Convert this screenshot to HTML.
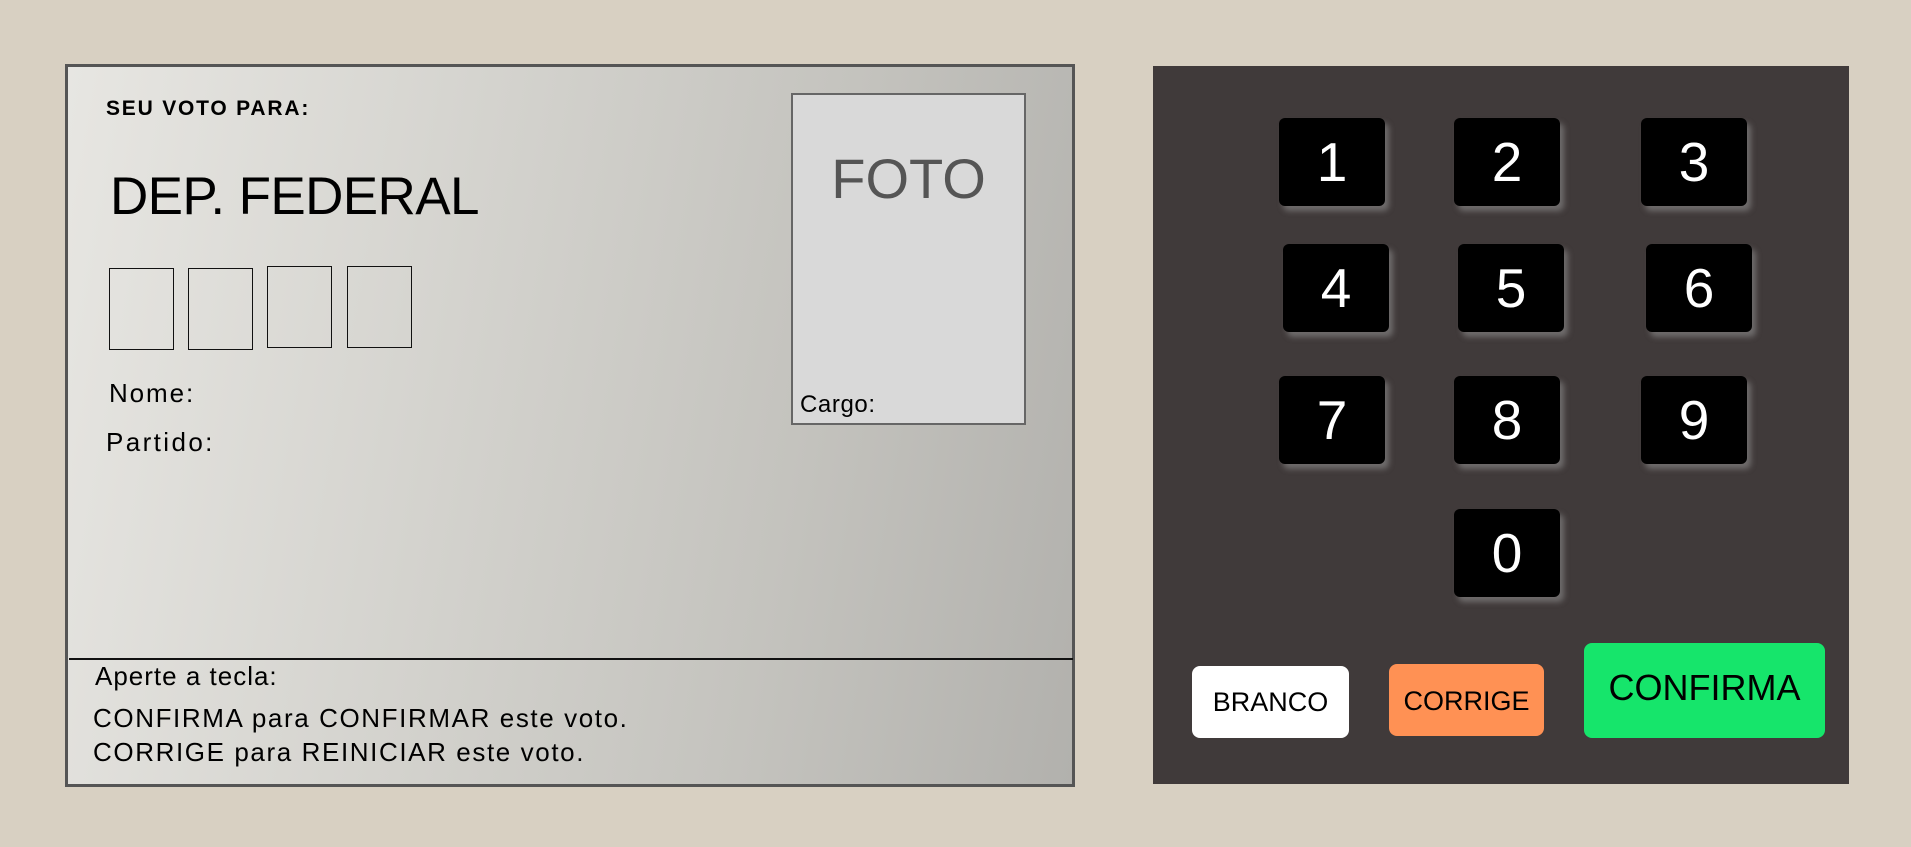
<!DOCTYPE html>
<html><head><meta charset="utf-8"><style>
*{margin:0;padding:0;box-sizing:border-box}
body{width:1911px;height:847px;background:#d8d0c2;position:relative;overflow:hidden;font-family:"Liberation Sans",sans-serif}
.a{position:absolute;white-space:nowrap}
#scr{left:65px;top:64px;width:1010px;height:723px;border:3px solid #555;background:linear-gradient(100deg,#e7e6e2 0%,#d3d2cd 40%,#c4c3be 70%,#b2b1ad 100%)}
.box{position:absolute;width:65px;height:82px;border:1.5px solid #111}
#foto{left:791px;top:93px;width:235px;height:332px;background:#d9d9d9;border:2px solid #666}
#pad{left:1153px;top:66px;width:696px;height:718px;background:#403a3a}
.k{position:absolute;width:106px;height:88px;background:#000;border-radius:6px;box-shadow:4px 5px 6px rgba(150,150,150,.55);color:#fff;font-size:55px;line-height:88px;text-align:center}
.b{position:absolute;border-radius:8px;text-align:center;color:#000}
.w{font-size:26px;letter-spacing:1.6px}
</style></head><body>
<div class="a" id="scr"></div>
<div class="a" style="left:106px;top:97px;font-size:21px;font-weight:bold;letter-spacing:1.8px">SEU VOTO PARA:</div>
<div class="a" style="left:110px;top:166px;font-size:53px;letter-spacing:-.6px">DEP. FEDERAL</div>
<div class="box" style="left:109px;top:268px"></div>
<div class="box" style="left:188px;top:268px"></div>
<div class="box" style="left:267px;top:266px"></div>
<div class="box" style="left:347px;top:266px"></div>
<div class="a w" style="left:109px;top:378px;letter-spacing:1.9px">Nome:</div>
<div class="a w" style="left:106px;top:427px;letter-spacing:2.4px">Partido:</div>
<div class="a" id="foto"></div>
<div class="a" style="left:791px;width:235px;text-align:center;top:146px;font-size:56px;color:#555">FOTO</div>
<div class="a" style="left:800px;top:391px;font-size:24px;letter-spacing:.6px">Cargo:</div>
<div class="a" style="left:69px;top:658px;width:1004px;height:2px;background:#111"></div>
<div class="a w" style="left:95px;top:661px;letter-spacing:1px">Aperte a tecla:</div>
<div class="a w" style="left:93px;top:703px">CONFIRMA para CONFIRMAR este voto.</div>
<div class="a w" style="left:93px;top:737px">CORRIGE para REINICIAR este voto.</div>
<div class="a" id="pad"></div>
<div class="k" style="left:1279px;top:118px">1</div>
<div class="k" style="left:1454px;top:118px">2</div>
<div class="k" style="left:1641px;top:118px">3</div>
<div class="k" style="left:1283px;top:244px">4</div>
<div class="k" style="left:1458px;top:244px">5</div>
<div class="k" style="left:1646px;top:244px">6</div>
<div class="k" style="left:1279px;top:376px">7</div>
<div class="k" style="left:1454px;top:376px">8</div>
<div class="k" style="left:1641px;top:376px">9</div>
<div class="k" style="left:1454px;top:509px">0</div>
<div class="b" style="left:1192px;top:666px;width:157px;height:72px;background:#fff;font-size:27px;line-height:72px">BRANCO</div>
<div class="b" style="left:1389px;top:664px;width:155px;height:72px;background:#ff9154;font-size:27px;line-height:74px">CORRIGE</div>
<div class="b" style="left:1584px;top:643px;width:241px;height:95px;background:#16e56b;font-size:36px;line-height:90px">CONFIRMA</div>
</body></html>
